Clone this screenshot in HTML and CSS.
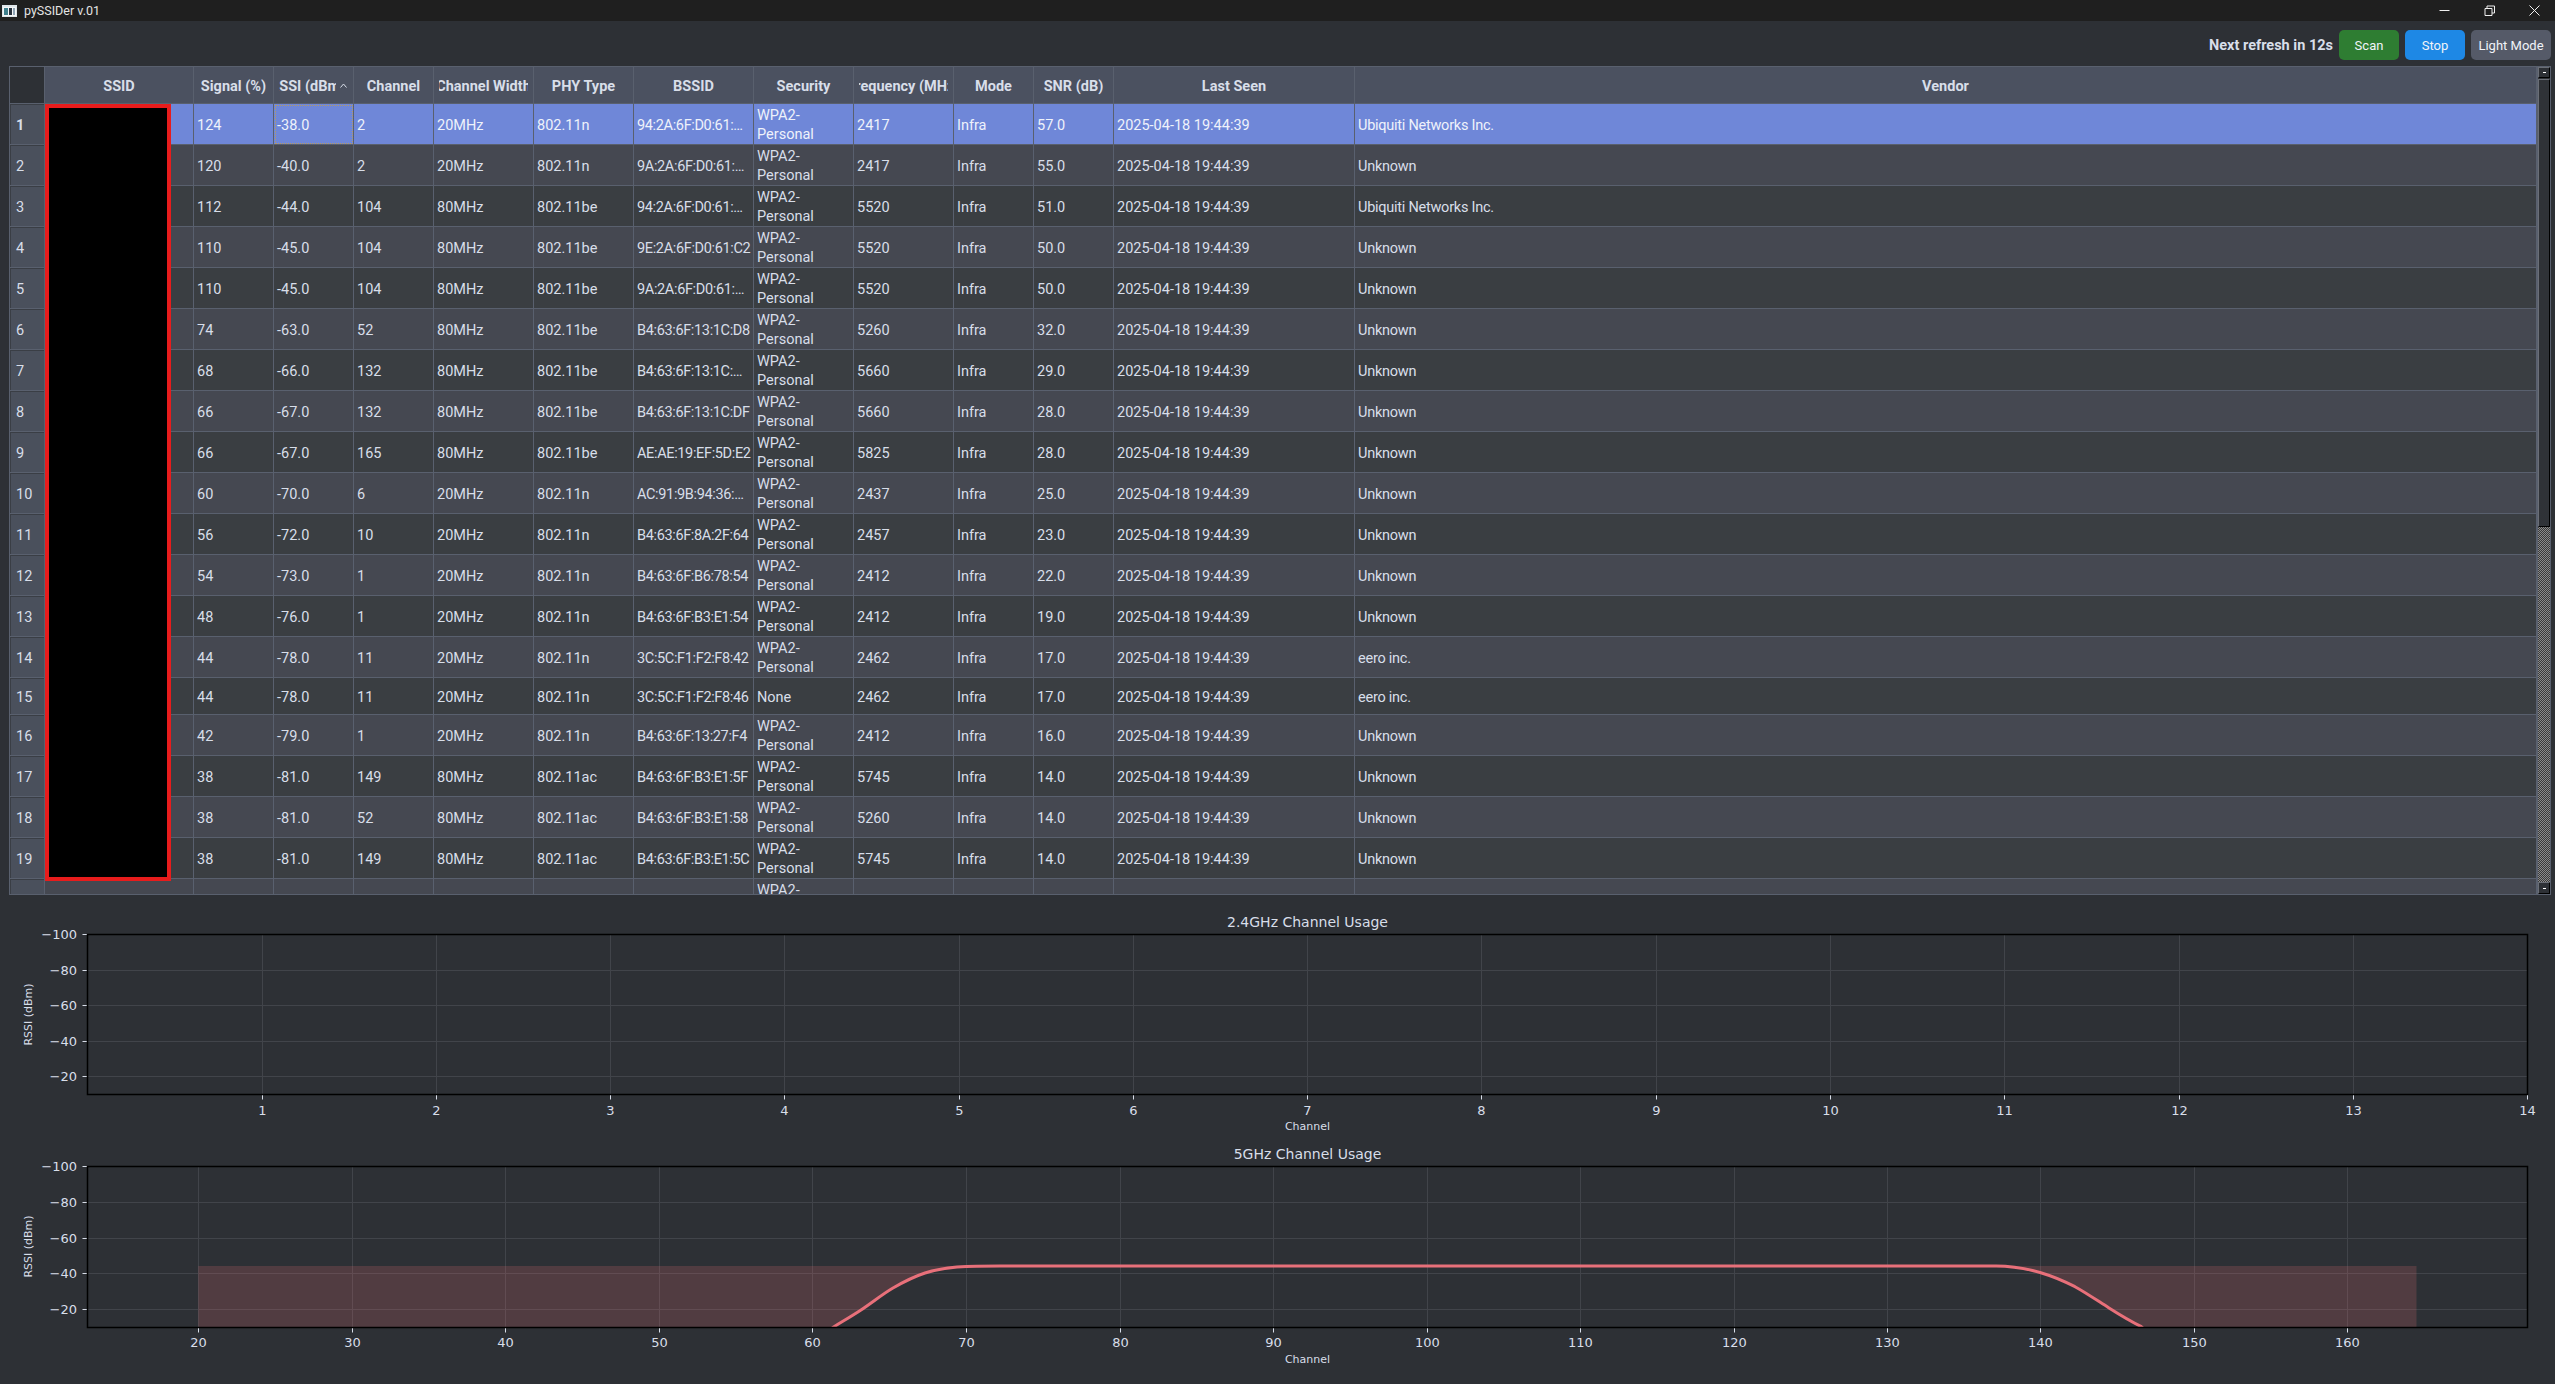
FILE: index.html
```html
<!DOCTYPE html>
<html lang="en">
<head>
<meta charset="utf-8">
<title>pySSIDer v.01</title>
<link rel="stylesheet" href="styles.css">
</head>
<body>
<div class="app">
  <header class="titlebar">
    <svg class="appicon" width="15" height="12" viewBox="0 0 15 12"><rect width="15" height="12" fill="#dfe6ea"/><rect x="1" y="2" width="13" height="9" fill="#f4f6f7"/><rect x="2" y="3" width="4" height="7" fill="#3f7f8c"/><rect x="7" y="3" width="3" height="7" fill="#27313d"/><rect x="11" y="3" width="2" height="7" fill="#8fa4b5"/></svg>
    <span class="apptitle">pySSIDer v.01</span>
    <div class="winctl">
      <svg width="11" height="11" viewBox="0 0 11 11"><path d="M0.5 5.5H10.5" class="ctl"/></svg>
      <svg width="11" height="11" viewBox="0 0 11 11"><path d="M1 3.5H8V10.5H1Z M3 3.5V1H10.5V8H8" class="ctl"/></svg>
      <svg width="11" height="11" viewBox="0 0 11 11"><path d="M0.5 0.5L10.5 10.5M10.5 0.5L0.5 10.5" class="ctl"/></svg>
    </div>
  </header>

  <div class="toolbar">
    <span class="countdown">Next refresh in 12s</span>
    <button class="btn btn-scan">Scan</button>
    <button class="btn btn-stop">Stop</button>
    <button class="btn btn-mode">Light Mode</button>
  </div>

  <section class="table">
    <div class="grid">
      <div class="row head">
        <div class="corner"></div>
        <div class="hc"><span class="hl">SSID</span></div>
        <div class="hc"><span class="hl">Signal (%)</span></div>
        <div class="hc"><span class="hl">RSSI (dBm)</span><svg class="sort" width="7" height="5" viewBox="0 0 7 5"><path d="M0.5 4.5L3.5 1L6.5 4.5"/></svg></div>
        <div class="hc"><span class="hl">Channel</span></div>
        <div class="hc"><span class="hl">Channel Width</span></div>
        <div class="hc"><span class="hl">PHY Type</span></div>
        <div class="hc"><span class="hl">BSSID</span></div>
        <div class="hc"><span class="hl">Security</span></div>
        <div class="hc"><span class="hl">Frequency (MHz)</span></div>
        <div class="hc"><span class="hl">Mode</span></div>
        <div class="hc"><span class="hl">SNR (dB)</span></div>
        <div class="hc"><span class="hl">Last Seen</span></div>
        <div class="hc"><span class="hl">Vendor</span></div>
      </div>
      <div class="row sel"><div class="rh rh-sel">1</div><div class="c"></div><div class="c">124</div><div class="c cur">-38.0</div><div class="c">2</div><div class="c">20MHz</div><div class="c">802.11n</div><div class="c">94:2A:6F:D0:61:…</div><div class="c">WPA2-<br>Personal</div><div class="c">2417</div><div class="c">Infra</div><div class="c">57.0</div><div class="c">2025-04-18 19:44:39</div><div class="c">Ubiquiti Networks Inc.</div></div>
      <div class="row alt"><div class="rh">2</div><div class="c"></div><div class="c">120</div><div class="c">-40.0</div><div class="c">2</div><div class="c">20MHz</div><div class="c">802.11n</div><div class="c">9A:2A:6F:D0:61:…</div><div class="c">WPA2-<br>Personal</div><div class="c">2417</div><div class="c">Infra</div><div class="c">55.0</div><div class="c">2025-04-18 19:44:39</div><div class="c">Unknown</div></div>
      <div class="row"><div class="rh">3</div><div class="c"></div><div class="c">112</div><div class="c">-44.0</div><div class="c">104</div><div class="c">80MHz</div><div class="c">802.11be</div><div class="c">94:2A:6F:D0:61:…</div><div class="c">WPA2-<br>Personal</div><div class="c">5520</div><div class="c">Infra</div><div class="c">51.0</div><div class="c">2025-04-18 19:44:39</div><div class="c">Ubiquiti Networks Inc.</div></div>
      <div class="row alt"><div class="rh">4</div><div class="c"></div><div class="c">110</div><div class="c">-45.0</div><div class="c">104</div><div class="c">80MHz</div><div class="c">802.11be</div><div class="c">9E:2A:6F:D0:61:C2</div><div class="c">WPA2-<br>Personal</div><div class="c">5520</div><div class="c">Infra</div><div class="c">50.0</div><div class="c">2025-04-18 19:44:39</div><div class="c">Unknown</div></div>
      <div class="row"><div class="rh">5</div><div class="c"></div><div class="c">110</div><div class="c">-45.0</div><div class="c">104</div><div class="c">80MHz</div><div class="c">802.11be</div><div class="c">9A:2A:6F:D0:61:…</div><div class="c">WPA2-<br>Personal</div><div class="c">5520</div><div class="c">Infra</div><div class="c">50.0</div><div class="c">2025-04-18 19:44:39</div><div class="c">Unknown</div></div>
      <div class="row alt"><div class="rh">6</div><div class="c"></div><div class="c">74</div><div class="c">-63.0</div><div class="c">52</div><div class="c">80MHz</div><div class="c">802.11be</div><div class="c">B4:63:6F:13:1C:D8</div><div class="c">WPA2-<br>Personal</div><div class="c">5260</div><div class="c">Infra</div><div class="c">32.0</div><div class="c">2025-04-18 19:44:39</div><div class="c">Unknown</div></div>
      <div class="row"><div class="rh">7</div><div class="c"></div><div class="c">68</div><div class="c">-66.0</div><div class="c">132</div><div class="c">80MHz</div><div class="c">802.11be</div><div class="c">B4:63:6F:13:1C:…</div><div class="c">WPA2-<br>Personal</div><div class="c">5660</div><div class="c">Infra</div><div class="c">29.0</div><div class="c">2025-04-18 19:44:39</div><div class="c">Unknown</div></div>
      <div class="row alt"><div class="rh">8</div><div class="c"></div><div class="c">66</div><div class="c">-67.0</div><div class="c">132</div><div class="c">80MHz</div><div class="c">802.11be</div><div class="c">B4:63:6F:13:1C:DF</div><div class="c">WPA2-<br>Personal</div><div class="c">5660</div><div class="c">Infra</div><div class="c">28.0</div><div class="c">2025-04-18 19:44:39</div><div class="c">Unknown</div></div>
      <div class="row"><div class="rh">9</div><div class="c"></div><div class="c">66</div><div class="c">-67.0</div><div class="c">165</div><div class="c">80MHz</div><div class="c">802.11be</div><div class="c">AE:AE:19:EF:5D:E2</div><div class="c">WPA2-<br>Personal</div><div class="c">5825</div><div class="c">Infra</div><div class="c">28.0</div><div class="c">2025-04-18 19:44:39</div><div class="c">Unknown</div></div>
      <div class="row alt"><div class="rh">10</div><div class="c"></div><div class="c">60</div><div class="c">-70.0</div><div class="c">6</div><div class="c">20MHz</div><div class="c">802.11n</div><div class="c">AC:91:9B:94:36:…</div><div class="c">WPA2-<br>Personal</div><div class="c">2437</div><div class="c">Infra</div><div class="c">25.0</div><div class="c">2025-04-18 19:44:39</div><div class="c">Unknown</div></div>
      <div class="row"><div class="rh">11</div><div class="c"></div><div class="c">56</div><div class="c">-72.0</div><div class="c">10</div><div class="c">20MHz</div><div class="c">802.11n</div><div class="c">B4:63:6F:8A:2F:64</div><div class="c">WPA2-<br>Personal</div><div class="c">2457</div><div class="c">Infra</div><div class="c">23.0</div><div class="c">2025-04-18 19:44:39</div><div class="c">Unknown</div></div>
      <div class="row alt"><div class="rh">12</div><div class="c"></div><div class="c">54</div><div class="c">-73.0</div><div class="c">1</div><div class="c">20MHz</div><div class="c">802.11n</div><div class="c">B4:63:6F:B6:78:54</div><div class="c">WPA2-<br>Personal</div><div class="c">2412</div><div class="c">Infra</div><div class="c">22.0</div><div class="c">2025-04-18 19:44:39</div><div class="c">Unknown</div></div>
      <div class="row"><div class="rh">13</div><div class="c"></div><div class="c">48</div><div class="c">-76.0</div><div class="c">1</div><div class="c">20MHz</div><div class="c">802.11n</div><div class="c">B4:63:6F:B3:E1:54</div><div class="c">WPA2-<br>Personal</div><div class="c">2412</div><div class="c">Infra</div><div class="c">19.0</div><div class="c">2025-04-18 19:44:39</div><div class="c">Unknown</div></div>
      <div class="row alt"><div class="rh">14</div><div class="c"></div><div class="c">44</div><div class="c">-78.0</div><div class="c">11</div><div class="c">20MHz</div><div class="c">802.11n</div><div class="c">3C:5C:F1:F2:F8:42</div><div class="c">WPA2-<br>Personal</div><div class="c">2462</div><div class="c">Infra</div><div class="c">17.0</div><div class="c">2025-04-18 19:44:39</div><div class="c">eero inc.</div></div>
      <div class="row short"><div class="rh">15</div><div class="c"></div><div class="c">44</div><div class="c">-78.0</div><div class="c">11</div><div class="c">20MHz</div><div class="c">802.11n</div><div class="c">3C:5C:F1:F2:F8:46</div><div class="c">None</div><div class="c">2462</div><div class="c">Infra</div><div class="c">17.0</div><div class="c">2025-04-18 19:44:39</div><div class="c">eero inc.</div></div>
      <div class="row alt"><div class="rh">16</div><div class="c"></div><div class="c">42</div><div class="c">-79.0</div><div class="c">1</div><div class="c">20MHz</div><div class="c">802.11n</div><div class="c">B4:63:6F:13:27:F4</div><div class="c">WPA2-<br>Personal</div><div class="c">2412</div><div class="c">Infra</div><div class="c">16.0</div><div class="c">2025-04-18 19:44:39</div><div class="c">Unknown</div></div>
      <div class="row"><div class="rh">17</div><div class="c"></div><div class="c">38</div><div class="c">-81.0</div><div class="c">149</div><div class="c">80MHz</div><div class="c">802.11ac</div><div class="c">B4:63:6F:B3:E1:5F</div><div class="c">WPA2-<br>Personal</div><div class="c">5745</div><div class="c">Infra</div><div class="c">14.0</div><div class="c">2025-04-18 19:44:39</div><div class="c">Unknown</div></div>
      <div class="row alt"><div class="rh">18</div><div class="c"></div><div class="c">38</div><div class="c">-81.0</div><div class="c">52</div><div class="c">80MHz</div><div class="c">802.11ac</div><div class="c">B4:63:6F:B3:E1:58</div><div class="c">WPA2-<br>Personal</div><div class="c">5260</div><div class="c">Infra</div><div class="c">14.0</div><div class="c">2025-04-18 19:44:39</div><div class="c">Unknown</div></div>
      <div class="row"><div class="rh">19</div><div class="c"></div><div class="c">38</div><div class="c">-81.0</div><div class="c">149</div><div class="c">80MHz</div><div class="c">802.11ac</div><div class="c">B4:63:6F:B3:E1:5C</div><div class="c">WPA2-<br>Personal</div><div class="c">5745</div><div class="c">Infra</div><div class="c">14.0</div><div class="c">2025-04-18 19:44:39</div><div class="c">Unknown</div></div>
      <div class="row alt"><div class="rh"></div><div class="c"></div><div class="c"></div><div class="c"></div><div class="c"></div><div class="c"></div><div class="c"></div><div class="c"></div><div class="c">WPA2-<br>Personal</div><div class="c"></div><div class="c"></div><div class="c"></div><div class="c"></div><div class="c"></div></div>
    </div>
    <div class="scrollbar">
      <div class="sb-btn"><span class="sb-dash"></span></div>
      <div class="sb-handle"></div>
      <div class="sb-trough"></div>
      <div class="sb-btn sb-btn-end"><span class="sb-dash"></span></div>
    </div>
    <div class="redact"></div>
  </section>

  <section class="charts">
    <svg class="chart" width="2555" height="232" viewBox="0 0 2555 232">
      <text class="ctitle" x="1307.5" y="24.5">2.4GHz Channel Usage</text>
      <path class="gridline" d="M262.5 32.5V192.5M436.5 32.5V192.5M610.5 32.5V192.5M784.5 32.5V192.5M959.5 32.5V192.5M1133.5 32.5V192.5M1307.5 32.5V192.5M1481.5 32.5V192.5M1656.5 32.5V192.5M1830.5 32.5V192.5M2004.5 32.5V192.5M2179.5 32.5V192.5M2353.5 32.5V192.5M87.5 68.5H2527.5M87.5 103.5H2527.5M87.5 139.5H2527.5M87.5 174.5H2527.5"/>
      <path class="tick" d="M262.5 192.5v5M436.5 192.5v5M610.5 192.5v5M784.5 192.5v5M959.5 192.5v5M1133.5 192.5v5M1307.5 192.5v5M1481.5 192.5v5M1656.5 192.5v5M1830.5 192.5v5M2004.5 192.5v5M2179.5 192.5v5M2353.5 192.5v5M2527.5 192.5v5M87.5 32.5h-5M87.5 68.5h-5M87.5 103.5h-5M87.5 139.5h-5M87.5 174.5h-5"/>
      <rect class="spine" x="87.5" y="32.5" width="2440" height="160"/>
      <text class="xt" x="262.5" y="213">1</text><text class="xt" x="436.5" y="213">2</text><text class="xt" x="610.5" y="213">3</text><text class="xt" x="784.5" y="213">4</text><text class="xt" x="959.5" y="213">5</text><text class="xt" x="1133.5" y="213">6</text><text class="xt" x="1307.5" y="213">7</text><text class="xt" x="1481.5" y="213">8</text><text class="xt" x="1656.5" y="213">9</text><text class="xt" x="1830.5" y="213">10</text><text class="xt" x="2004.5" y="213">11</text><text class="xt" x="2179.5" y="213">12</text><text class="xt" x="2353.5" y="213">13</text><text class="xt" x="2527.5" y="213">14</text>
      <text class="yt" x="77" y="37">−100</text><text class="yt" x="77" y="73">−80</text><text class="yt" x="77" y="108">−60</text><text class="yt" x="77" y="144">−40</text><text class="yt" x="77" y="179">−20</text>
      <text class="axl" x="1307.5" y="228">Channel</text>
      <text class="axl" transform="translate(32 112.5) rotate(-90)">RSSI (dBm)</text>
    </svg>
    <svg class="chart" width="2555" height="232" viewBox="0 0 2555 232">
      <defs><clipPath id="plot5"><rect x="87.5" y="32.5" width="2440" height="161"/></clipPath></defs>
      <text class="ctitle" x="1307.5" y="24.5">5GHz Channel Usage</text>
      <path class="gridline" d="M198.5 32.5V193.5M352.5 32.5V193.5M505.5 32.5V193.5M659.5 32.5V193.5M812.5 32.5V193.5M966.5 32.5V193.5M1120.5 32.5V193.5M1273.5 32.5V193.5M1427.5 32.5V193.5M1580.5 32.5V193.5M1734.5 32.5V193.5M1887.5 32.5V193.5M2040.5 32.5V193.5M2194.5 32.5V193.5M2347.5 32.5V193.5M87.5 68.5H2527.5M87.5 104.5H2527.5M87.5 139.5H2527.5M87.5 175.5H2527.5"/>
      <g clip-path="url(#plot5)">
        <path class="band" d="M198.3 194V132H1000C985 132 971 132.2 957 133C946.3 134 935.7 135.5 925 139C914.3 142.5 903.7 147.8 893 154C882.3 160.2 871.7 169 861 176C850.5 182.9 843 187.1 834 192.7L831 194Z"/>
        <path class="band" d="M2416.5 194V132H1996C2012 132 2028 135 2040.8 138.7C2052 142 2064 147 2075 152.7C2086.5 159 2098 167 2109 174C2120 181 2130 187 2141.4 192.7L2144 194Z"/>
        <path class="curve" d="M831 195L834 192.7C843 187.1 850.5 182.9 861 176C871.7 169 882.3 160.2 893 154C903.7 147.8 914.3 142.5 925 139C935.7 135.5 946.3 134 957 133C971 132.2 985 132 1000 132H1996C2012 132 2028 135 2040.8 138.7C2052 142 2064 147 2075 152.7C2086.5 159 2098 167 2109 174C2120 181 2130 187 2141.4 192.7L2144 195"/>
      </g>
      <path class="tick" d="M198.5 193.5v5M352.5 193.5v5M505.5 193.5v5M659.5 193.5v5M812.5 193.5v5M966.5 193.5v5M1120.5 193.5v5M1273.5 193.5v5M1427.5 193.5v5M1580.5 193.5v5M1734.5 193.5v5M1887.5 193.5v5M2040.5 193.5v5M2194.5 193.5v5M2347.5 193.5v5M87.5 32.5h-5M87.5 68.5h-5M87.5 104.5h-5M87.5 139.5h-5M87.5 175.5h-5"/>
      <rect class="spine" x="87.5" y="32.5" width="2440" height="161"/>
      <text class="xt" x="198.5" y="213">20</text><text class="xt" x="352.5" y="213">30</text><text class="xt" x="505.5" y="213">40</text><text class="xt" x="659.5" y="213">50</text><text class="xt" x="812.5" y="213">60</text><text class="xt" x="966.5" y="213">70</text><text class="xt" x="1120.5" y="213">80</text><text class="xt" x="1273.5" y="213">90</text><text class="xt" x="1427.5" y="213">100</text><text class="xt" x="1580.5" y="213">110</text><text class="xt" x="1734.5" y="213">120</text><text class="xt" x="1887.5" y="213">130</text><text class="xt" x="2040.5" y="213">140</text><text class="xt" x="2194.5" y="213">150</text><text class="xt" x="2347.5" y="213">160</text>
      <text class="yt" x="77" y="37">−100</text><text class="yt" x="77" y="73">−80</text><text class="yt" x="77" y="109">−60</text><text class="yt" x="77" y="144">−40</text><text class="yt" x="77" y="180">−20</text>
      <text class="axl" x="1307.5" y="229">Channel</text>
      <text class="axl" transform="translate(32 112.5) rotate(-90)">RSSI (dBm)</text>
    </svg>
  </section>
</div>
</body>
</html>
```
FILE: styles.css
```css
* { box-sizing: border-box; }
html, body { margin: 0; height: 100%; overflow: hidden; }
body { background: #2d3035; color: #d8dee9; font-family: Roboto, "Noto Sans", sans-serif; font-size: 14.5px; }
.app { display: flex; flex-direction: column; height: 100vh; }

.titlebar { flex: none; height: 21px; background: #1f1f1f; display: flex; align-items: center; padding-left: 2px; }
.appicon { flex: none; }
.apptitle { margin-left: 7px; font-size: 12.5px; color: #e4e4e4; }
.winctl { margin-left: auto; display: flex; gap: 34px; padding-right: 15px; }
.ctl { fill: none; stroke: #f0f0f0; stroke-width: 1; }

.toolbar { flex: none; height: 45px; padding: 9px 4px 6px; display: flex; justify-content: flex-end; align-items: stretch; gap: 6px; }
.countdown { align-self: center; padding-top: 1px; font-weight: 700; font-size: 14.5px; color: #d8dee9; }
.btn { border: 1px solid transparent; border-radius: 5px; width: 60px; padding: 0; color: #f0f3f8; font: 13px Roboto, "Noto Sans", sans-serif; }
.btn-scan { background: #2e7d32; }
.btn-stop { background: #1e88e5; }
.btn-mode { background: #555a68; width: 80px; }

.table { position: relative; flex: none; height: 829px; margin: 0 4px 0 9px; border: 1px solid #59606e; display: flex; }
.grid { flex: 1; min-width: 0; overflow: hidden; }
.row { display: grid; grid-template-columns: 35px 149px 80px 80px 80px 100px 100px 120px 100px 100px 80px 80px 241px 1fr; height: 41px; background: #3a3e42; }
.row.alt { background: #454851; }
.row.short { height: 37px; }
.row.sel { background: #6f87d8; color: #eef2fb; }
.row.head { height: 37px; background: #4b5160; font-weight: 700; }

.corner { background: #2d3035; border-right: 1px solid #59606e; border-bottom: 1px solid #59606e; }
.hc { display: flex; align-items: center; padding: 2px 5px 0; min-width: 0; border-right: 1px solid #59606e; border-bottom: 1px solid #59606e; }
.hl { flex: 1; min-width: 0; overflow: hidden; display: flex; justify-content: center; white-space: nowrap; }
.sort { flex: none; margin: 0 1px 2px 4px; fill: none; stroke: #d8dee9; stroke-width: 1; }

.rh { display: flex; align-items: center; padding: 2px 0 0 6px; background: #4a505c; color: #d8dee9; border: 1px solid #59606e; border-width: 0 1px 1px 0; box-shadow: inset 1px 1px 0 #3a3e45; }
.rh-sel { font-weight: 700; }
.c { display: flex; align-items: center; padding: 2px 0 0 3px; min-width: 0; overflow: hidden; white-space: nowrap; line-height: 19px; border-right: 1px solid #59606e; border-bottom: 1px solid #59606e; }
.c:nth-child(8) { letter-spacing: -0.35px; }
.c:nth-child(14) { letter-spacing: -0.25px; }
.cur { outline: 1px dotted #b89a5e; outline-offset: -2px; }

.scrollbar { flex: none; width: 13px; display: flex; flex-direction: column; border-left: 1px solid #59606e; background: #2d3035; }
.sb-btn { flex: none; height: 11px; display: flex; align-items: center; justify-content: center; background: #2d3035; border: 1px solid; border-color: #6a6e76 #000 #000 #6a6e76; }
.sb-btn-end { height: 12px; }
.sb-dash { width: 3px; height: 1px; background: #fff; }
.sb-handle { flex: none; height: 448px; margin-top: 1px; background: #2f3237; border: 1px solid; border-color: #6a6e76 #000 #000 #6a6e76; }
.sb-trough { flex: 1; background: repeating-conic-gradient(#8a8a8a 0 25%, #3a3a3a 0 50%) 0 0 / 2px 2px; }

.redact { position: absolute; left: 35px; top: 37px; width: 126px; height: 777px; background: #000; border: 4px solid #e81c1c; }

.charts { flex: none; margin-top: 7px; display: flex; flex-direction: column; }
.chart { display: block; flex: none; }
.chart text { font-family: "DejaVu Sans", sans-serif; fill: #d8dee9; }
.ctitle { font-size: 14px; text-anchor: middle; }
.chart .xt { font-size: 13px; text-anchor: middle; }
.chart .yt { font-size: 13px; text-anchor: end; }
.axl { font-size: 11px; text-anchor: middle; }
.gridline { fill: none; stroke: #41444a; stroke-width: 1; }
.tick { fill: none; stroke: #d8dee9; stroke-width: 1; }
.spine { fill: none; stroke: #000; stroke-width: 1.5; }
.band { fill: rgba(224, 108, 117, 0.2); }
.curve { fill: none; stroke: #e8707a; stroke-width: 3; }
```
